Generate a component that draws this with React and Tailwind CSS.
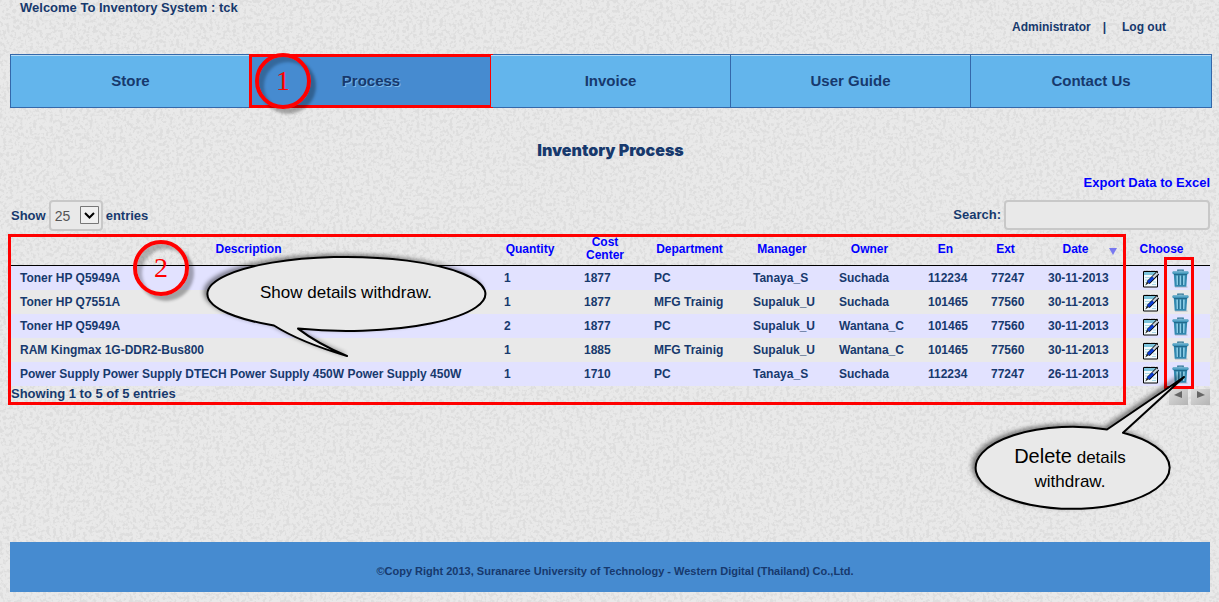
import React from "react";

const navItems = ["Store", "Process", "Invoice", "User Guide", "Contact Us"];

const columns = [
  { label: "Description", width: "" },
  { label: "Quantity", width: "w-[80px]" },
  { label: "Cost Center", width: "w-[70px]" },
  { label: "Department", width: "w-[99px]" },
  { label: "Manager", width: "w-[86px]" },
  { label: "Owner", width: "w-[89px]" },
  { label: "En", width: "w-[63px]" },
  { label: "Ext", width: "w-[57px]" },
  { label: "Date", width: "w-[83px]", sorted: true },
  { label: "Choose", width: "w-[89px]" },
];

const rows = [
  ["Toner HP Q5949A", "1", "1877", "PC", "Tanaya_S", "Suchada", "112234", "77247", "30-11-2013"],
  ["Toner HP Q7551A", "1", "1877", "MFG Trainig", "Supaluk_U", "Suchada", "101465", "77560", "30-11-2013"],
  ["Toner HP Q5949A", "2", "1877", "PC", "Supaluk_U", "Wantana_C", "101465", "77560", "30-11-2013"],
  ["RAM Kingmax 1G-DDR2-Bus800", "1", "1885", "MFG Trainig", "Supaluk_U", "Wantana_C", "101465", "77560", "30-11-2013"],
  ["Power Supply Power Supply DTECH Power Supply 450W Power Supply 450W", "1", "1710", "PC", "Tanaya_S", "Suchada", "112234", "77247", "26-11-2013"],
];

function PaperTexture() {
  return (
    <svg className="absolute inset-0 -z-10 h-full w-full" aria-hidden="true">
      <filter id="paper" x="0" y="0" width="100%" height="100%" colorInterpolationFilters="sRGB">
        <feTurbulence type="fractalNoise" baseFrequency="0.3" numOctaves="2" seed="4" />
        <feColorMatrix values="0 0 0 0 0.76  0 0 0 0 0.76  0 0 0 0 0.76  7 0 0 0 -3.4" />
      </filter>
      <rect width="100%" height="100%" filter="url(#paper)" opacity="0.28" />
    </svg>
  );
}

function EditIcon() {
  return (
    <svg viewBox="0 0 17 19" className="h-[19px] w-[17px]" aria-hidden="true">
      <path d="M1.5 2.5h14v15.5h-14z" fill="#f4fbfd" stroke="#000" />
      <path d="M2 3h13v3H2z" fill="#7cc4dc" />
      <path d="M2 2.2h14" stroke="#000" strokeWidth="1.6" strokeDasharray="1.2 1.2" />
      <path d="M2 1.2h14" stroke="#fff" strokeWidth="1" strokeDasharray="1.2 1.2" />
      <path d="M3 8.500h7M3 11h6M3 13.500h3M10 15.500h4M11 13h3" stroke="#a9d8e6" />
      <path d="M15.600 4.200 L6.200 13.600" stroke="#000" strokeWidth="4" />
      <path d="M15.600 4 L11 8.600" stroke="#c9d3dd" strokeWidth="2.2" />
      <path d="M11.200 8.400 L6 13.600" stroke="#0d3fd6" strokeWidth="2.8" />
      <path d="M6.800 14.200 L3.200 16.400 L5 12.600z" fill="#222" />
    </svg>
  );
}

function TrashIcon() {
  return (
    <svg viewBox="0 0 17 19" className="h-[19px] w-[17px]" aria-hidden="true">
      <path d="M3 17.600h12.500v.9H3z" fill="#9a9aa8" opacity="0.7" />
      <path d="M5.800 2.600V1.200h5.400v1.400" fill="none" stroke="#2b7595" strokeWidth="1.2" />
      <path d="M1.800 5h13.400l-.9 12.800H2.700z" fill="#3389b0" />
      <path d="M4.300 6.500h1.800v9.600H4.700zM7.600 6.500h1.600v9.600H7.600zM11 6.500h1.800l-.4 9.600H11z" fill="#8ccde6" />
      <path d="M6.400 6.500h.8v9.800h-.8zM9.700 6.500h.8v9.800h-.8z" fill="#1c5e7d" />
      <rect x="0.5" y="2.2" width="16" height="3" rx="1" fill="#3f93b8" />
      <path d="M1.200 3h14.600" stroke="#8ac6de" strokeWidth="0.8" />
      <path d="M2 5.600h13" stroke="#1c5e7d" strokeWidth="0.8" />
    </svg>
  );
}

function StepMarker({ number, position }) {
  return (
    <span
      className={`pointer-events-none absolute z-20 flex h-[56px] w-[56px] items-center justify-center rounded-full border-4 border-[#f00] font-['Liberation_Serif',serif] text-[28px] leading-none font-normal text-[#f00] shadow-[5px_5px_3px_rgba(0,0,0,0.3),inset_5px_5px_3px_rgba(0,0,0,0.25)] ${position}`}
    >
      {number}
    </span>
  );
}

function PageButton({ label, path }) {
  return (
    <button
      type="button"
      aria-label={label}
      className="flex h-4 w-[19px] items-start justify-center bg-linear-to-br from-[#dedede] to-[#b4b4b4] pt-0.5"
    >
      <svg viewBox="0 0 9 8" className="h-2 w-[9px]" aria-hidden="true">
        <path d={path} fill="#666" />
      </svg>
    </button>
  );
}

export default function App() {
  return (
    <div className="relative isolate flex min-h-screen flex-col overflow-hidden bg-[#e9e9e9] pr-[7px] pl-2.5 font-['Liberation_Sans',Arial,sans-serif] text-xs font-bold text-[#17396d]">
      <PaperTexture />

      <header className="flex h-[54px] justify-between pr-[46px] pl-2.5 text-[13px]">
        <p className="leading-[15px]">Welcome To Inventory System : tck</p>
        <div className="flex gap-3 pt-5 text-xs leading-[15px]">
          <a href="#admin">Administrator</a>
          <span>|</span>
          <a href="#logout" className="pl-1">Log out</a>
        </div>
      </header>

      <nav className="grid h-[54px] grid-cols-5 border border-[#3468aa] text-[15px]">
        {navItems.map((item) => {
          const active = item === "Process";
          return (
            <div key={item} className="group relative">
              <a
                href={`#${item}`}
                className={
                  active
                    ? "flex h-full items-center justify-center bg-[#468bd0] [text-shadow:1px_1px_0_#79b8e8]"
                    : "flex h-full items-center justify-center border-r border-[#3468aa] bg-[#63b5ec] shadow-[inset_0_1px_0_#b5dcf5] group-last:border-r-0"
                }
              >
                {item}
              </a>
              {active && (
                <>
                  <span className="pointer-events-none absolute -inset-x-0.5 -inset-y-px border-[3px] border-[#f00]" />
                  <StepMarker number="1" position="-top-0.5 left-1" />
                </>
              )}
            </div>
          );
        })}
      </nav>

      <main className="pr-0.5 pl-px">
        <h1 className="pt-8 text-center font-['Inter',sans-serif] text-base leading-5 font-black">Inventory Process</h1>
        <div className="pt-3 text-right text-[13px] leading-[22px] text-[#0000ff]">
          <a href="#export">Export Data to Excel</a>
        </div>

        <div className="flex h-[39px] items-start justify-between pt-1.5 text-[13px]">
          <label className="flex items-center gap-[3px]">
            Show
            <span className="relative">
              <select
                defaultValue="25"
                className="block h-[31px] w-[54px] appearance-none rounded border-2 border-[#c8c8c8] bg-[#e9e9e9] pl-1 text-sm font-normal text-[#555]"
              >
                <option>10</option>
                <option>25</option>
                <option>50</option>
                <option>100</option>
              </select>
              <svg viewBox="0 0 19 18" className="pointer-events-none absolute top-1.5 right-1 h-[18px] w-[19px]" aria-hidden="true">
                <path d="M.5.5h18v17H.5z" fill="#f0f0f0" stroke="#777" />
                <path d="M5 7l4.500 4.500L14 7" fill="none" stroke="#000" strokeWidth="2" />
              </svg>
            </span>
            entries
          </label>
          <label className="flex items-center gap-[3px]">
            Search:
            <input type="text" className="h-[30px] w-[206px] rounded border-2 border-[#c8c8c8] bg-[#e9e9e9] px-2 font-normal" />
          </label>
        </div>

        <section className="relative">
          <table className="w-full table-fixed border-separate border-spacing-0">
            <thead>
              <tr className="text-[#0000ff]">
                {columns.map((c) => (
                  <th
                    key={c.label}
                    scope="col"
                    className={`relative h-[33px] border-b border-black pr-[18px] pl-2.5 text-center leading-[13px] ${c.width}`}
                  >
                    {c.label}
                    {c.sorted && (
                      <svg viewBox="0 0 8 7" className="absolute right-1 bottom-2.5 h-[7px] w-2" aria-hidden="true">
                        <path d="M0 0h8L4 7z" fill="#7878f0" />
                      </svg>
                    )}
                  </th>
                ))}
              </tr>
            </thead>
            <tbody>
              {rows.map((row, i) => (
                <tr key={i} className="h-6 odd:bg-[#e2e2ff] even:bg-[#e9e9e9]">
                  {row.map((cell, j) => (
                    <td key={j} className="h-6 pl-2.5 leading-4 whitespace-nowrap first:pl-[9px]">
                      {cell}
                    </td>
                  ))}
                  <td className="h-6 pl-[21px]">
                    <div className="flex gap-[13px]">
                      <button type="button" aria-label="Edit">
                        <EditIcon />
                      </button>
                      <button type="button" aria-label="Delete">
                        <TrashIcon />
                      </button>
                    </div>
                  </td>
                </tr>
              ))}
            </tbody>
          </table>

          <div className="flex h-5 items-start justify-between">
            <p className="text-[13px] leading-4">Showing 1 to 5 of 5 entries</p>
            <div className="flex gap-[3px] pt-[3px]">
              <PageButton label="Previous page" path="M8 0v7L0 4z" />
              <PageButton label="Next page" path="M1 0v7l8-3z" />
            </div>
          </div>

          <span className="pointer-events-none absolute top-px right-[84px] bottom-px -left-[3px] border-[3px] border-[#f00]" />
          <span className="pointer-events-none absolute top-6 right-4 h-[132px] w-[30px] border-[3px] border-[#f00]" />
          <StepMarker number="2" position="top-[7px] left-[122px]" />

          <div className="pointer-events-none absolute top-[22px] left-[195px] h-[104px] w-[284px]">
            <svg viewBox="206 255 284 104" className="h-full w-full overflow-visible drop-shadow-[-3px_-2px_2px_rgba(0,0,0,0.45)]" aria-hidden="true">
              <path d="M274 325.500A139 37 0 1 1 298 328.600Q318 344 347 356Q300 342 274 325.500Z" fill="#e9e9e9" stroke="#000" strokeWidth="2" strokeLinejoin="round" />
            </svg>
            <p className="absolute inset-x-0 top-[26px] pr-1 text-center text-[17px] leading-6 font-normal text-black">
              Show details withdraw.
            </p>
          </div>

          <div className="pointer-events-none absolute top-[142px] right-[25px] h-[136px] w-[212px]">
            <svg viewBox="973 375 212 136" className="h-full w-full overflow-visible drop-shadow-[-3px_-2px_2px_rgba(0,0,0,0.45)]" aria-hidden="true">
              <path d="M1123 432.800A97 41 0 1 1 1107 429.500L1184 377Z" fill="#e9e9e9" stroke="#000" strokeWidth="2" strokeLinejoin="round" />
            </svg>
            <p className="absolute top-[69px] left-0 w-[194px] text-center text-[17px] leading-6 font-normal text-black">
              <span className="text-xl leading-6">Delete</span> details
              <br />
              withdraw.
            </p>
          </div>
        </section>
      </main>

      <footer className="mt-auto mr-0.5 mb-2.5 flex h-[50px] items-center justify-center bg-[#468bd0] pt-2 pl-2.5 text-[11px]">
        ©Copy Right 2013, Suranaree University of Technology - Western Digital (Thailand) Co.,Ltd.
      </footer>
    </div>
  );
}
